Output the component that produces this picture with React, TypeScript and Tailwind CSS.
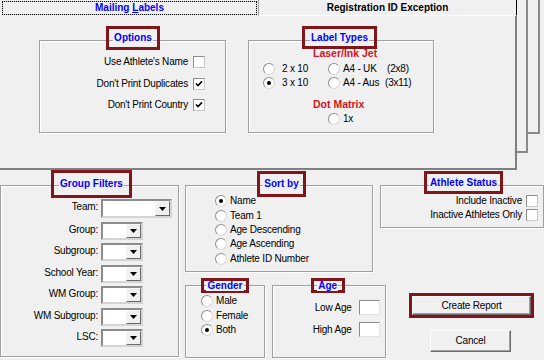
import React from "react";

function Check({ on }: { on?: boolean }) {
  return (
    <span className="flex h-[12px] w-[12px] shrink-0 items-center justify-center border border-[#8e8f8f] border-r-[#c8c8c8] border-b-[#c8c8c8] bg-white">
      {on && (
        <svg width="8" height="8" viewBox="0 0 8 8">
          <path d="M1 3.5 L3 5.6 L7 1.4" fill="none" stroke="#000" strokeWidth="1.6" />
        </svg>
      )}
    </span>
  );
}

function Radio({ on }: { on?: boolean }) {
  return (
    <span className="flex h-[12px] w-[12px] shrink-0 items-center justify-center rounded-full border border-[#8e8f8f] border-r-[#d8d8d8] border-b-[#d8d8d8] bg-white">
      {on && <span className="h-[4px] w-[4px] rounded-full bg-black" />}
    </span>
  );
}

function Group({ className, children }: { className: string; children: React.ReactNode }) {
  return (
    <div className={"relative border border-[#a0a0a0] shadow-[inset_1px_1px_0_#fff,1px_1px_0_#fff] " + className}>
      {children}
    </div>
  );
}

// red annotation box around a groupbox caption
function Legend({ className, children }: { className: string; children: React.ReactNode }) {
  return (
    <div className={"absolute flex items-center justify-center border-[3px] border-[#80151a] " + className}>
      <span className="bg-[#f0f0f0] px-[1px] font-bold leading-none tracking-normal text-[#0000ff]">{children}</span>
    </div>
  );
}

function Combo({ className }: { className: string }) {
  return (
    <div className={"flex border-2 border-t-[#8c8c8c] border-l-[#8c8c8c] border-r-[#d4d4d4] border-b-[#d4d4d4] bg-white " + className}>
      <div className="flex-1" />
      <div className="flex w-[15px] items-center justify-center border border-t-[#f8f8f8] border-l-[#f8f8f8] border-r-[#696969] border-b-[#696969] bg-[#f0f0f0]">
        <svg width="7" height="4" viewBox="0 0 7 4">
          <path d="M0 0H7L3.5 4Z" fill="#000" />
        </svg>
      </div>
    </div>
  );
}

function Button({ children }: { children: React.ReactNode }) {
  return (
    <div className="flex h-full w-full items-center justify-center border border-t-white border-l-white border-r-[#696969] border-b-[#696969] shadow-[inset_-1px_-1px_0_#a0a0a0]">
      {children}
    </div>
  );
}

const filters: [string, boolean][] = [
  ["Team:", true],
  ["Group:", false],
  ["Subgroup:", false],
  ["School Year:", false],
  ["WM Group:", false],
  ["WM Subgroup:", false],
  ["LSC:", false],
];

const sorts = ["Name", "Team 1", "Age Descending", "Age Ascending", "Athlete ID Number"];

export default function App() {
  return (
    <div className="relative h-[360px] w-[544px] overflow-hidden bg-[#f0f0f0] font-['Liberation_Sans',Arial,sans-serif] text-[10px] leading-[12px] tracking-[-0.2px] text-black">
      {/* top: tabbed panel with stacked pages behind */}
      <div className="relative h-[170px]">
        <div className="absolute left-[300px] top-0 h-[134px] w-[240px] border-r-2 border-b-2 border-[#8a8a8a] bg-[#f0f0f0]" />
        <div className="absolute left-[300px] top-0 h-[153px] w-[228px] border-r-2 border-b-2 border-[#8a8a8a] bg-[#f0f0f0]" />

        <div className="relative flex h-[170px] w-[517px] flex-col bg-[#f0f0f0]">
          <div className="flex h-[16px]">
            <div className="h-[16px] w-[258px] pl-[2px] pr-[1px] pt-[1px] pb-[1px]">
              <div className="h-full border border-dotted border-black bg-[#e0dc58]">
                <div className="flex h-full items-center justify-center bg-[#f0f0f0] font-bold tracking-normal text-[#0000ff]">
                  <span>
                    {"Mailing "}
                    <u>L</u>abels
                  </span>
                </div>
              </div>
            </div>
            <div className="flex h-[16px] flex-1 items-center justify-center border-l border-r border-b border-l-[#a0a0a0] border-r-black border-b-white font-bold tracking-normal">
              Registration ID Exception
            </div>
          </div>

          <div className="flex flex-1 gap-[22px] border-r-2 border-b-2 border-[#808080] pl-[39px] pt-[24px]">
            <Group className="flex h-[93px] w-[187px] flex-col items-end gap-[9.5px] pr-[20px] pt-[15px]">
              <Legend className="left-[66px] -top-[15px] h-[24px] w-[54px]">Options</Legend>
              <div className="flex items-center gap-[5px]">
                <span>Use Athlete's Name</span>
                <Check />
              </div>
              <div className="flex items-center gap-[5px]">
                <span>Don't Print Duplicates</span>
                <Check on />
              </div>
              <div className="flex items-center gap-[5px]">
                <span>Don't Print Country</span>
                <Check on />
              </div>
            </Group>

            <Group className="h-[93px] w-[186px]">
              <Legend className="left-[53px] -top-[15px] h-[23px] w-[75px]">Label Types</Legend>
              <div className="mt-[6px] pl-[64px] text-[10.5px] font-bold tracking-normal text-[#d4141c]">Laser/Ink Jet</div>
              <div className="mt-[4px] flex h-[12px] items-center pl-[14px]">
                <Radio />
                <span className="ml-[7px] w-[46px]">2 x 10</span>
                <Radio />
                <span className="ml-[3px] w-[44px]">A4 - UK</span>
                <span>(2x8)</span>
              </div>
              <div className="mt-[2px] flex h-[12px] items-center pl-[14px]">
                <Radio on />
                <span className="ml-[7px] w-[46px]">3 x 10</span>
                <Radio />
                <span className="ml-[3px] w-[42px]">A4 - Aus</span>
                <span>(3x11)</span>
              </div>
              <div className="mt-[9px] pl-[64px] text-[10.5px] font-bold tracking-normal text-[#d4141c]">Dot Matrix</div>
              <div className="mt-[3px] flex h-[12px] items-center pl-[79px]">
                <Radio />
                <span className="ml-[3px]">1x</span>
              </div>
            </Group>
          </div>
        </div>
      </div>

      {/* bottom: filters, sort, status and actions */}
      <div className="flex h-[190px]">
        <Group className="mt-[15px] flex h-[172px] w-[181px] flex-col gap-[3.5px] pt-[13px]">
          <Legend className="left-[50px] -top-[16px] h-[28px] w-[81px]">Group Filters</Legend>
          {filters.map(([label, wide]) => (
            <div key={label} className="flex items-start">
              <span className="mt-[2px] w-[97px] text-right">{label}</span>
              <Combo className={wide ? "ml-[3px] h-[19px] w-[71px]" : "ml-[3px] h-[18px] w-[42px]"} />
            </div>
          ))}
        </Group>

        <div className="ml-[6px] mt-[15px] flex w-[201px] flex-col">
          <Group className="h-[87px] w-[188px] pl-[29px] pt-[8px]">
            <Legend className="left-[71px] -top-[15px] h-[26px] w-[49px]">Sort by</Legend>
            {sorts.map((s, i) => (
              <div key={s} className="flex h-[14.4px] items-center gap-[3px]">
                <Radio on={i === 0} />
                <span>{s}</span>
              </div>
            ))}
          </Group>

          <div className="mt-[13px] flex gap-[7px]">
            <Group className="h-[73px] w-[80px] pl-[15px] pt-[8px]">
              <Legend className="left-[15px] -top-[8px] h-[15px] w-[48px]">Gender</Legend>
              {["Male", "Female", "Both"].map((g) => (
                <div key={g} className="flex h-[14.5px] items-center gap-[3px]">
                  <Radio on={g === "Both"} />
                  <span>{g}</span>
                </div>
              ))}
            </Group>

            <Group className="flex h-[73px] w-[115px] flex-col gap-[7px] pt-[14px]">
              <Legend className="left-[38px] -top-[8px] h-[15px] w-[34px]">Age</Legend>
              {["Low Age", "High Age"].map((a) => (
                <div key={a} className="flex h-[15px] items-center">
                  <span className="w-[79px] text-right">{a}</span>
                  <div className="ml-[7px] h-[15px] w-[21px] border border-t-[#8c8c8c] border-l-[#8c8c8c] border-r-[#e3e3e3] border-b-[#e3e3e3] bg-white" />
                </div>
              ))}
            </Group>
          </div>
        </div>

        <div className="-ml-[6px] mt-[15px] flex flex-col">
          <Group className="flex h-[43px] w-[164px] flex-col items-end pr-[5px] pt-[8px]">
            <Legend className="left-[43px] -top-[15px] h-[23px] w-[79px]">Athlete Status</Legend>
            <div className="flex h-[14px] items-center gap-[4px]">
              <span>Include Inactive</span>
              <Check />
            </div>
            <div className="flex h-[14px] items-center gap-[4px]">
              <span>Inactive Athletes Only</span>
              <Check />
            </div>
          </Group>

          <div className="ml-[29px] mt-[65px] h-[25px] w-[125px] border-[3px] border-[#80151a]">
            <Button>Create Report</Button>
          </div>
          <div className="ml-[50px] mt-[12px] h-[22px] w-[81px]">
            <Button>Cancel</Button>
          </div>
        </div>
      </div>
    </div>
  );
}
